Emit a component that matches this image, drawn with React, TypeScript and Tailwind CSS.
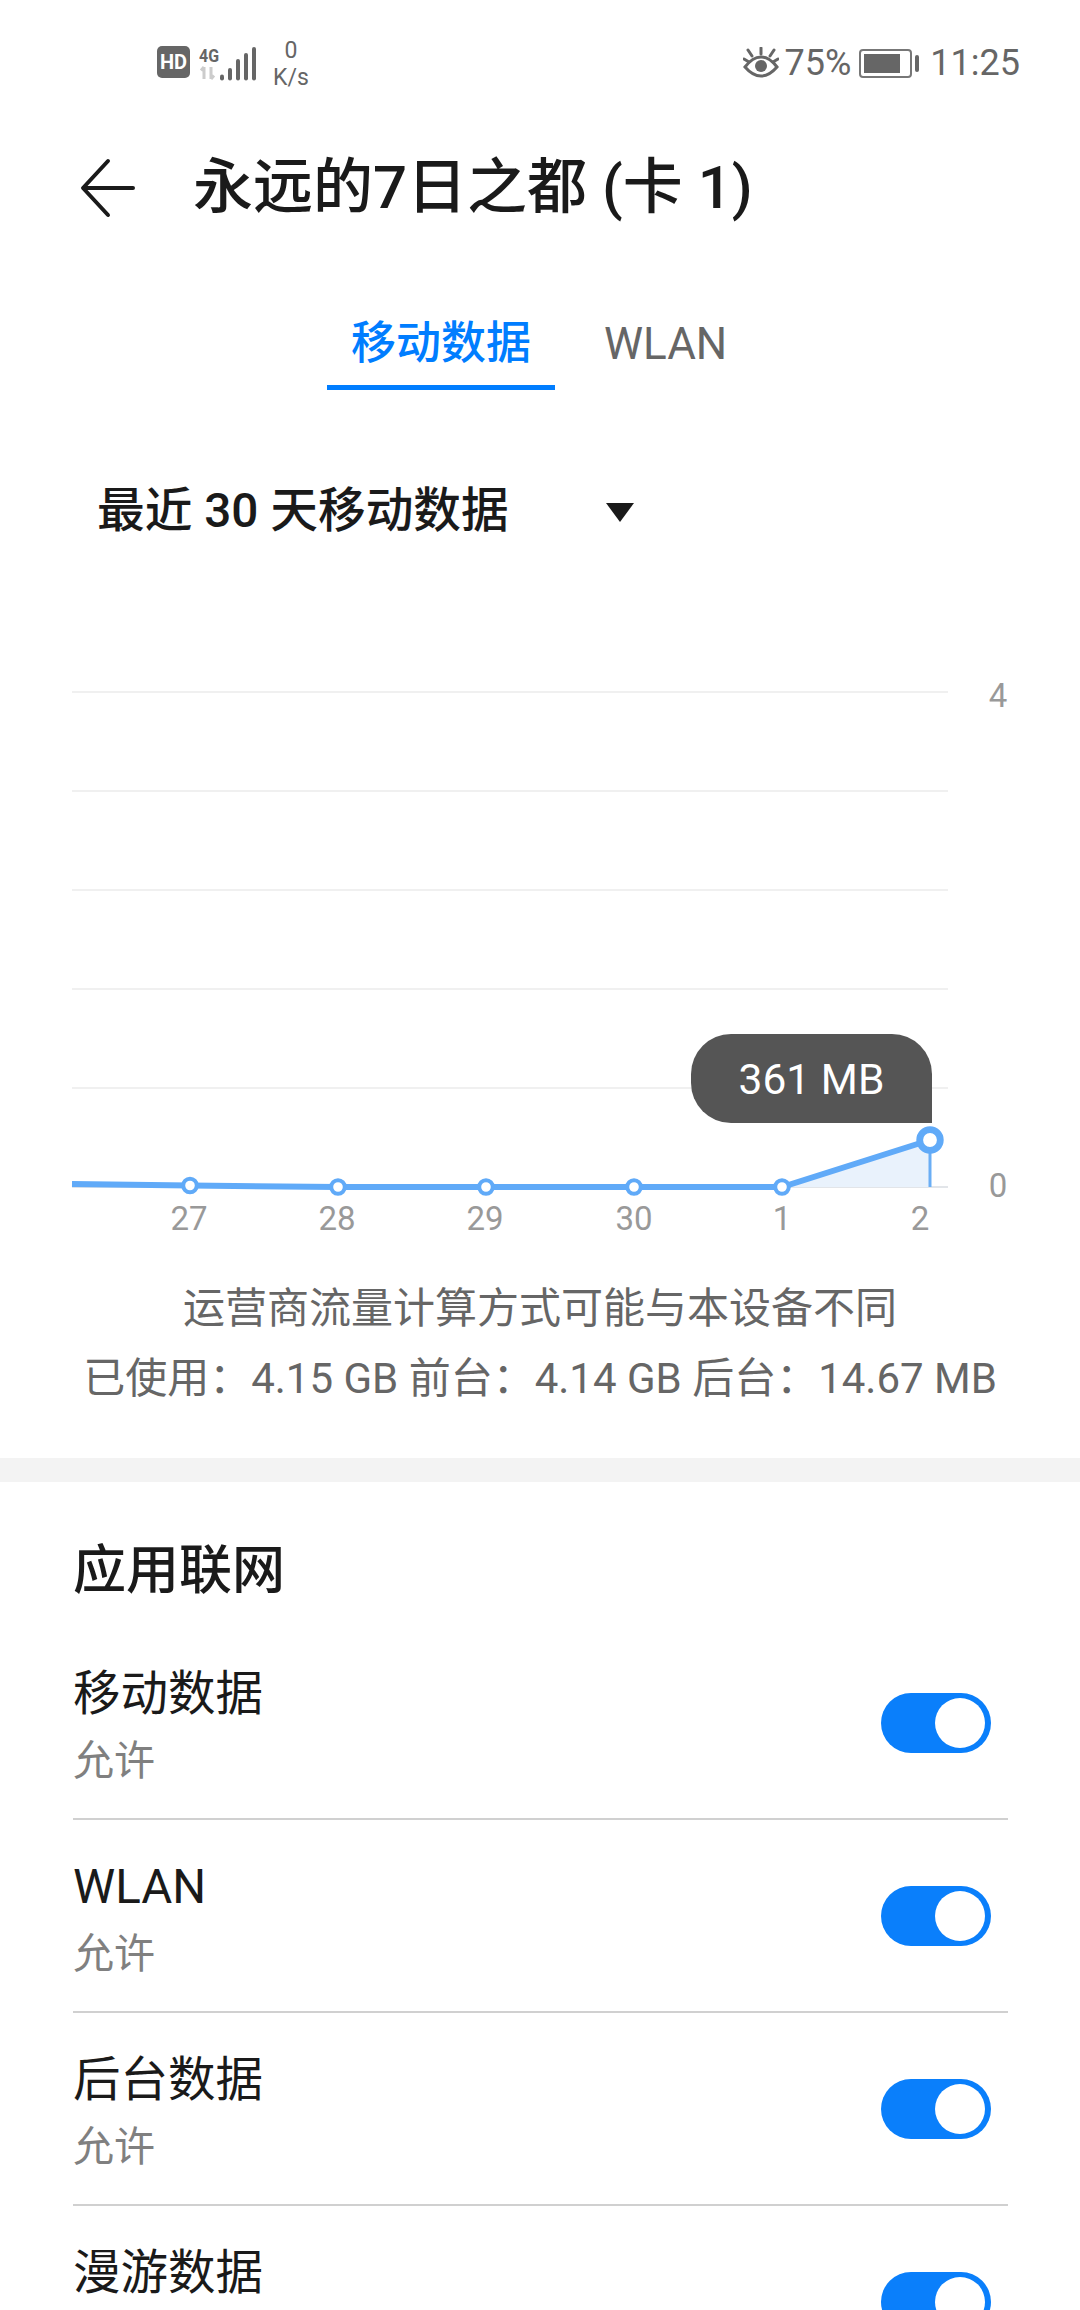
import React from 'react';

const FONT = "font-['Roboto','Noto_Sans_CJK_SC',sans-serif]";

const points: [number, number][] = [
  [190, 1185.5],
  [338, 1187],
  [486, 1187],
  [634, 1187],
  [782, 1187],
];

const gridLines = [692, 791, 890, 989, 1088];

const dates: [string, number][] = [
  ['27', 189],
  ['28', 337],
  ['29', 485],
  ['30', 634],
  ['1', 782],
  ['2', 920],
];

// the last row runs off the bottom of the screen, its second line is not visible
const rows = [
  { title: '移动数据', sub: '允许' },
  { title: 'WLAN', sub: '允许' },
  { title: '后台数据', sub: '允许' },
  { title: '漫游数据', sub: '' },
];

function SignalIcon() {
  return (
    <svg width="60" height="38" viewBox="0 -4 60 38">
      <text x="0" y="15" fontFamily="Roboto, sans-serif" fontSize="18" fontWeight="700" fill="#666" textLength="20" lengthAdjust="spacingAndGlyphs">
        4G
      </text>
      <path d="M5 20v12M2 23.5 5 20M12 20v12M12 32l3-3.5" stroke="#ccc" strokeWidth="3" fill="none" />
      <g stroke="#666" strokeWidth="4" strokeLinecap="round">
        <path d="M23 29.5v2" />
        <path d="M31 23v8.5" />
        <path d="M39 14v17.5" />
        <path d="M47 8v23.5" />
        <path d="M55 2v29.5" />
      </g>
    </svg>
  );
}

function EyeIcon() {
  return (
    <svg width="36" height="32" viewBox="0 0 36 32" fill="none">
      <path d="M2 20C8 12 13 10 18 10s10 2 16 10c-6 7-11 9-16 9S8 27 2 20Z" stroke="#666" strokeWidth="3" />
      <circle cx="18" cy="19" r="6" fill="#666" />
      <path d="M18 1v6M5 3l4 6M31 3l-4 6M1 12l5 3M35 12l-5 3" stroke="#666" strokeWidth="3" strokeLinecap="round" />
    </svg>
  );
}

function BatteryIcon() {
  return (
    <div className="flex items-center gap-[3px]">
      <div className="w-[53px] h-[29px] rounded-[4px] border-2 border-[#777] p-[3px]">
        <div className="w-[36px] h-full bg-[#666]" />
      </div>
      <div className="w-[4px] h-[17px] rounded-[2px] bg-[#666]" />
    </div>
  );
}

function Toggle() {
  return (
    <div className="w-[110px] h-[60px] rounded-full bg-[#0a7ffb] flex items-center justify-end pr-[6px]">
      <div className="w-[50px] h-[50px] rounded-full bg-white" />
    </div>
  );
}

function UsageChart() {
  return (
    <div className="relative h-[590px] mt-[118px]">
      <svg width="1080" height="590" viewBox="0 660 1080 590" className="block">
        {gridLines.map((y) => (
          <line key={y} x1="72" x2="948" y1={y} y2={y} stroke="#f0f0f0" strokeWidth="2" />
        ))}
        <line x1="72" x2="948" y1="1187" y2="1187" stroke="#e2e5e9" strokeWidth="2" />
        <path d="M782 1187 L930 1140 V1187 Z" fill="#e9f2fc" />
        <line x1="930" x2="930" y1="1140" y2="1187" stroke="#6aaef5" strokeWidth="3" />
        <polyline
          points="72,1184 190,1185.5 338,1187 486,1187 634,1187 782,1187 930,1140"
          fill="none"
          stroke="#60aaf8"
          strokeWidth="6"
        />
        {points.map(([x, y]) => (
          <circle key={x} cx={x} cy={y} r="6.8" fill="#fff" stroke="#60aaf8" strokeWidth="4" />
        ))}
        <circle cx="930" cy="1140" r="10.3" fill="#fff" stroke="#60aaf8" strokeWidth="6.8" />
        <g fontFamily="Roboto, sans-serif" fontSize="33" fill="#999" textAnchor="middle">
          {dates.map(([label, x]) => (
            <text key={label} x={x} y="1230">
              {label}
            </text>
          ))}
          <text x="998" y="707">
            4
          </text>
          <text x="998" y="1197">
            0
          </text>
        </g>
      </svg>
      <div className="absolute left-[691px] top-[374px] w-[241px] h-[89px] bg-[#555] rounded-[40px] rounded-br-none flex items-center justify-center pt-[3px] text-white text-[42.5px]">
        361 MB
      </div>
    </div>
  );
}

export default function App() {
  return (
    <div className={`w-[1080px] h-[2310px] overflow-hidden bg-white ${FONT}`}>
      <div className="h-[124px] flex items-center justify-between pl-[157px] pr-[60px] text-[#666]">
        <div className="flex items-center">
          <div className="w-[33px] h-[32px] rounded-[5px] bg-[#666] text-white text-[20px] font-bold flex items-center justify-center">
            HD</div>
          <div className="ml-[9px]">
            <SignalIcon />
          </div>
          <div className="w-[42px] ml-[11px] text-center text-[23px] leading-[27px] mt-[4px]">
            <div>0</div>
            <div>K/s</div>
          </div>
        </div>
        <div className="flex items-center pt-[2px]">
          <EyeIcon />
          <span className="text-[36px] ml-[6px] mr-[8px]">75%</span>
          <BatteryIcon />
          <span className="text-[36px] ml-[11px]">11:25</span>
        </div>
      </div>

      <div className="h-[128px] flex items-center">
        <svg width="60" height="60" viewBox="0 0 60 60" fill="none" className="ml-[77px]">
          <path d="M56 30H7M31 3 6 30l25 27" stroke="#1a1a1a" strokeWidth="4" strokeLinecap="round" strokeLinejoin="round" />
        </svg>
        <h1 className="ml-[56px] text-[60px] font-medium text-[#1a1a1a] whitespace-nowrap">永远的7日之都 (卡 1)</h1>
      </div>

      <div className="flex items-stretch pl-[327px] mt-[62px] h-[76px]">
        <div className="w-[228px] border-b-[5px] border-[#007dff] text-[#007dff] text-[45px] font-medium text-center leading-[60px]">
          移动数据
        </div>
        <div className="ml-[49px] text-[#666] text-[44px] leading-[60px]">WLAN</div>
      </div>

      <div className="flex items-center h-[60px] mt-[92px] pl-[97px]">
        <span className="w-[411px] text-[47.7px] font-medium text-[#1a1a1a] whitespace-nowrap">最近 30 天移动数据</span>
        <div className="ml-[98px] w-0 h-0 border-x-[14px] border-x-transparent border-t-[19px] border-t-[#1a1a1a]" />
      </div>

      <UsageChart />

      <div className="text-center text-[#666] text-[42px] leading-[70px] mt-[24px] pb-[44px] whitespace-nowrap">
        <div>运营商流量计算方式可能与本设备不同</div>
        <div>已使用：4.15 GB 前台：4.14 GB 后台：14.67 MB</div>
      </div>

      <div className="h-[24px] bg-[#f3f3f3]" />

      <div className="pl-[73px] pr-[72px]">
        <h2 className="pt-[60px] h-[145px] text-[53px] leading-[58px] font-medium text-[#1a1a1a]">应用联网</h2>
        {rows.map(({ title, sub }) => (
          <div key={title} className="h-[193px] border-b-2 border-[#d0d0d0] flex items-center justify-between pr-[17px]">
            <div className="pt-[10px]">
              <div className="text-[47.5px] leading-[67px] text-[#1a1a1a]">{title}</div>
              <div className="h-[67px] text-[41px] leading-[67px] text-[#808080]">{sub}</div>
            </div>
            <Toggle />
          </div>
        ))}
      </div>
    </div>
  );
}
